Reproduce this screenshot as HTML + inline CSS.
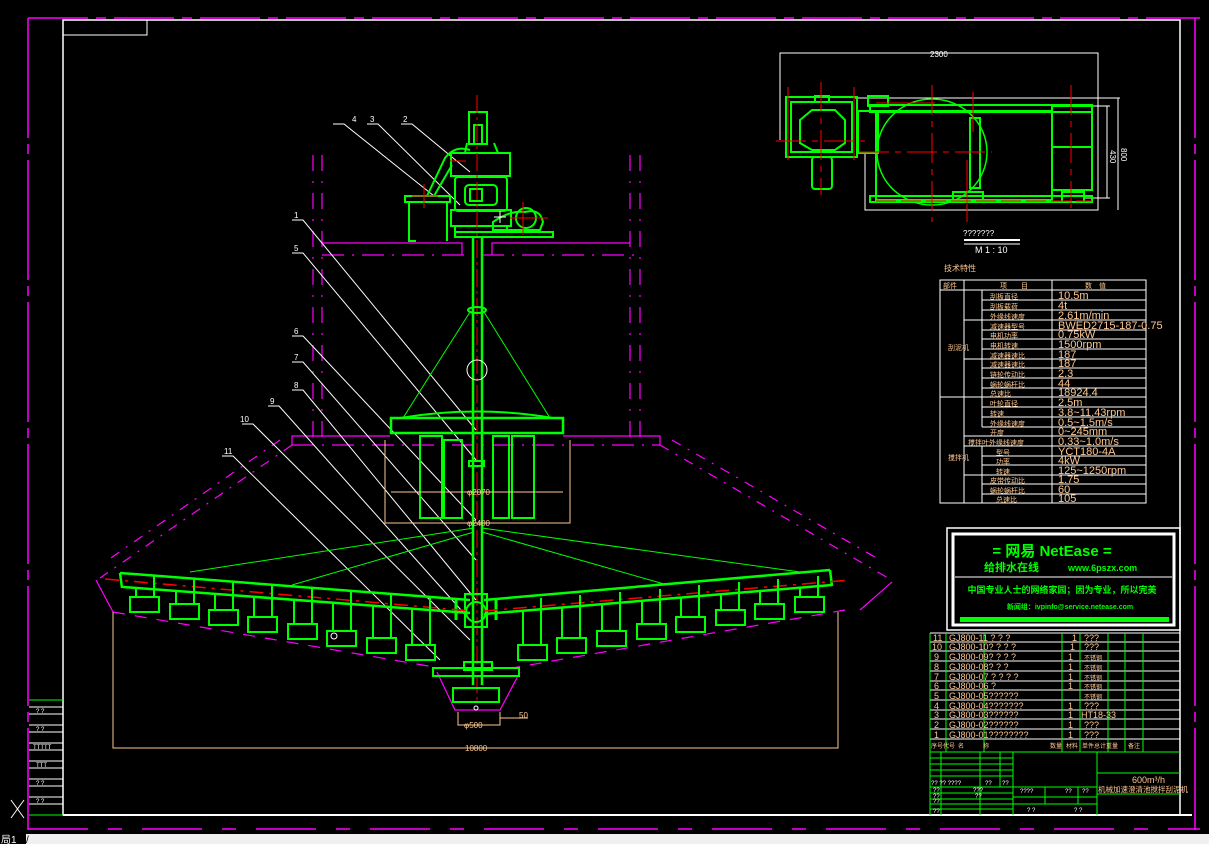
<!DOCTYPE html>
<html><head><meta charset="utf-8"><style>
html,body{margin:0;padding:0;background:#000;width:1209px;height:844px;overflow:hidden}
svg{display:block}
text{font-family:"Liberation Sans","Noto Sans CJK SC",sans-serif}
.o{fill:#ffc890}
.w{fill:#fff}
.g{fill:#00ff00}
</style></head><body>
<svg width="1209" height="844" viewBox="0 0 1209 844" xmlns="http://www.w3.org/2000/svg">
<rect width="1209" height="844" fill="#000"/>
<g fill="none">
<line x1="28" y1="18" x2="1200" y2="18" stroke="#ff00ff" stroke-width="1.5" stroke-dasharray="60 8 10 8"/>
<line x1="28" y1="18" x2="28" y2="830" stroke="#ff00ff" stroke-width="1.5" stroke-dasharray="120 6 10 6"/>
<line x1="1195" y1="18" x2="1195" y2="830" stroke="#ff00ff" stroke-width="1.5" stroke-dasharray="120 6 10 6"/>
<line x1="28" y1="829" x2="1200" y2="829" stroke="#ff00ff" stroke-width="1.5" stroke-dasharray="60 20 14 20"/>
<rect x="63" y="20" width="1117" height="795" stroke="#fff" stroke-width="1.5"/>
<rect x="63" y="20" width="84" height="15" stroke="#fff" stroke-width="1"/>
<line x1="63" y1="815" x2="1192" y2="815" stroke="#fff" stroke-width="2"/>
</g>
<g stroke="#fff" stroke-width="1">
<line x1="29" y1="700" x2="63" y2="700" stroke="#00ff00"/>
<line x1="29" y1="707" x2="63" y2="707"/><line x1="29" y1="714" x2="63" y2="714"/>
<line x1="29" y1="725" x2="63" y2="725"/><line x1="29" y1="732" x2="63" y2="732"/>
<line x1="29" y1="743" x2="63" y2="743"/><line x1="29" y1="750" x2="63" y2="750"/>
<line x1="29" y1="761" x2="63" y2="761"/><line x1="29" y1="768" x2="63" y2="768"/>
<line x1="29" y1="779" x2="63" y2="779"/><line x1="29" y1="786" x2="63" y2="786"/>
<line x1="29" y1="797" x2="63" y2="797"/><line x1="29" y1="804" x2="63" y2="804"/>
<line x1="29" y1="815" x2="63" y2="815" stroke="#00ff00"/>
<line x1="11" y1="800" x2="24" y2="818"/><line x1="24" y1="800" x2="11" y2="818"/>
</g>
<g class="w" font-size="6"><text x="36" y="713">? ?</text><text x="36" y="731">? ?</text><text x="33" y="749">TTTTT</text><text x="36" y="767">TTT</text><text x="36" y="785">? ?</text><text x="36" y="803">? ?</text></g>

<g fill="none" stroke="#ff00ff" stroke-width="1.2">
<line x1="313" y1="155" x2="313" y2="440" stroke-dasharray="16 10 2 10"/>
<line x1="322" y1="155" x2="322" y2="440" stroke-dasharray="16 10 2 10"/>
<line x1="630" y1="155" x2="630" y2="440" stroke-dasharray="16 10 2 10"/>
<line x1="640" y1="155" x2="640" y2="440" stroke-dasharray="16 10 2 10"/>
<polyline points="322,243 462,243 462,255"/>
<polyline points="492,255 492,243 630,243"/>
<line x1="322" y1="255" x2="640" y2="255" stroke-dasharray="22 8 2 8"/>
<polyline points="292,445 292,436 390,436"/>
<polyline points="563,436 660,436 660,445"/>
<line x1="292" y1="445" x2="660" y2="445" stroke-dasharray="22 8 2 8"/>
<line x1="292" y1="445" x2="100" y2="578" stroke-dasharray="10 8 2 8"/>
<line x1="280" y1="440" x2="108" y2="560" stroke-dasharray="10 8 2 8"/>
<line x1="660" y1="445" x2="888" y2="578" stroke-dasharray="10 8 2 8"/>
<line x1="672" y1="440" x2="880" y2="560" stroke-dasharray="10 8 2 8"/>
<polyline points="96,580 113,612"/>
<polyline points="892,582 860,610"/>
<line x1="113" y1="612" x2="440" y2="668" stroke-dasharray="12 10"/>
<line x1="845" y1="610" x2="512" y2="668" stroke-dasharray="12 10"/>
<polyline points="437,672 455,710 500,710 520,672"/>
</g>

<g stroke="#fff" stroke-width="1" fill="none">
<polyline points="333,124 344,124 434,196"/>
<polyline points="367,124 378,124 460,205"/>
<polyline points="401,124 412,124 470,172"/>
<polyline points="292,220 303,220 476,430"/>
<polyline points="292,253 303,253 476,460"/>
<polyline points="292,336 303,336 476,520"/>
<polyline points="292,362 303,362 476,560"/>
<polyline points="292,390 303,390 476,600"/>
<polyline points="268,406 279,406 470,620"/>
<polyline points="242,424 253,424 470,640"/>
<polyline points="222,456 233,456 440,660"/>
</g>
<g class="w" font-size="8" font-family="Liberation Mono,monospace">
<text x="352" y="122">4</text><text x="370" y="122">3</text><text x="403" y="122">2</text>
<text x="294" y="218">1</text><text x="294" y="251">5</text><text x="294" y="334">6</text>
<text x="294" y="360">7</text><text x="294" y="388">8</text><text x="270" y="404">9</text>
<text x="240" y="422">10</text><text x="224" y="454">11</text>
</g>

<g fill="none" stroke="#00ff00" stroke-width="2">
<rect x="469" y="112" width="18" height="32"/>
<rect x="474" y="125" width="8" height="19"/>
<polyline points="467,143 465,153 498,153 494,143"/>
<rect x="451" y="153" width="59" height="23"/>
<rect x="455" y="177" width="52" height="34" rx="3"/>
<rect x="465" y="185" width="32" height="20" rx="4"/>
<rect x="470" y="189" width="12" height="12"/>
<rect x="451" y="210" width="60" height="16"/>
<rect x="455" y="226" width="52" height="6"/>
<rect x="455" y="232" width="98" height="5"/>
<rect x="405" y="196" width="45" height="6"/>
<polyline points="409,202 409,241 416,241"/>
<polyline points="447,202 447,241"/>
<path d="M427,196 L445,158 Q455,145 470,150 M434,196 L452,165"/>
<path d="M493,222 Q510,210 525,212 Q540,208 543,222 L540,230 L493,230 Z"/>
<circle cx="526" cy="218" r="10"/>
</g>
<g stroke="#ff0000" stroke-width="1">
<line x1="477" y1="95" x2="477" y2="700" stroke-dasharray="18 4 3 4"/>
<line x1="424" y1="184" x2="424" y2="208"/><line x1="412" y1="196" x2="438" y2="196"/>
<line x1="450" y1="161" x2="466" y2="161"/>
<line x1="523" y1="202" x2="523" y2="235"/><line x1="510" y1="218" x2="548" y2="218"/>
</g>
<g stroke="#fff" stroke-width="1"><line x1="500" y1="211" x2="500" y2="223"/><line x1="494" y1="217" x2="506" y2="217"/></g>

<g stroke="#00ff00" stroke-width="2.5">
<line x1="473" y1="237" x2="473" y2="685"/>
<line x1="482" y1="237" x2="482" y2="685"/>
</g>
<g fill="none" stroke="#00ff00">
<ellipse cx="477" cy="310" rx="9" ry="3" stroke-width="2"/>
<line x1="470" y1="312" x2="403" y2="418" stroke-width="1"/>
<line x1="484" y1="312" x2="550" y2="418" stroke-width="1"/>
<path d="M400,418 Q477,405 553,418" stroke-width="2"/>
<rect x="391" y="418" width="172" height="15" stroke-width="2.5"/>
<line x1="391" y1="433" x2="563" y2="433" stroke-width="2"/>
<rect x="420" y="436" width="22" height="82" stroke-width="2"/>
<rect x="444" y="440" width="18" height="78" stroke-width="2"/>
<rect x="493" y="436" width="16" height="82" stroke-width="2"/>
<rect x="512" y="436" width="22" height="82" stroke-width="2"/>
<rect x="469" y="461" width="15" height="5" stroke-width="2"/>
<rect x="464" y="662" width="28" height="8" stroke-width="2"/>
<rect x="433" y="668" width="86" height="8" stroke-width="2"/>
<rect x="453" y="688" width="46" height="14" stroke-width="2"/>
<circle cx="476" cy="612" r="10" stroke-width="2"/>
<rect x="465" y="594" width="22" height="33" stroke-width="2"/>
<line x1="456" y1="598" x2="456" y2="620" stroke-width="3"/>
<line x1="496" y1="598" x2="496" y2="620" stroke-width="3"/>
</g>
<g fill="none" stroke="#fff" stroke-width="1">
<circle cx="477" cy="370" r="10"/>
<circle cx="334" cy="636" r="3"/>
<circle cx="476" cy="708" r="2"/>
</g>
<g stroke="#ffc890" stroke-width="1" fill="none">
<line x1="391" y1="492" x2="563" y2="492"/>
<polyline points="385,440 385,523 570,523 570,440"/>
<polyline points="113,612 113,748 838,748 838,612"/>
<polyline points="458,712 458,725 500,725 500,712"/>
<line x1="500" y1="718" x2="528" y2="718"/>
</g>
<g class="o" font-size="8" font-family="Liberation Mono,monospace">
<text x="467" y="495">φ2070</text><text x="467" y="526">φ2400</text>
<text x="465" y="751">10800</text><text x="464" y="728">φ500</text><text x="519" y="718">50</text>
</g>

<g stroke="#00ff00" stroke-width="1" fill="none">
<line x1="474" y1="528" x2="190" y2="572"/>
<line x1="474" y1="532" x2="292" y2="585"/>
<line x1="482" y1="528" x2="800" y2="572"/>
<line x1="482" y1="532" x2="664" y2="584"/>
</g>

<g fill="none" stroke="#00ff00" stroke-width="2.5">
<polyline points="120,573 470,600"/>
<polyline points="123,587 470,613"/>
<line x1="120" y1="573" x2="122" y2="588"/>
<polyline points="484,600 830,570"/>
<polyline points="484,614 832,585"/>
<line x1="830" y1="570" x2="832" y2="586"/>
</g>
<g stroke="#ff0000" stroke-width="1.5" stroke-dasharray="14 6 3 6">
<line x1="105" y1="579" x2="472" y2="611"/>
<line x1="484" y1="611" x2="850" y2="580"/>
</g>
<g fill="none" stroke="#00ff00" stroke-width="2">
<g><rect x="130" y="597" width="29" height="15"/><line x1="136" y1="588" x2="136" y2="597"/><line x1="154" y1="576" x2="154" y2="597"/></g>
<g><rect x="170" y="604" width="29" height="15"/><line x1="176" y1="591" x2="176" y2="604"/><line x1="194" y1="579" x2="194" y2="604"/></g>
<g><rect x="209" y="610" width="29" height="15"/><line x1="215" y1="594" x2="215" y2="610"/><line x1="233" y1="582" x2="233" y2="610"/></g>
<g><rect x="248" y="617" width="29" height="15"/><line x1="254" y1="597" x2="254" y2="617"/><line x1="272" y1="585" x2="272" y2="617"/></g>
<g><rect x="288" y="624" width="29" height="15"/><line x1="294" y1="600" x2="294" y2="624"/><line x1="312" y1="588" x2="312" y2="624"/></g>
<g><rect x="327" y="631" width="29" height="15"/><line x1="333" y1="603" x2="333" y2="631"/><line x1="351" y1="591" x2="351" y2="631"/></g>
<g><rect x="367" y="638" width="29" height="15"/><line x1="373" y1="606" x2="373" y2="638"/><line x1="391" y1="594" x2="391" y2="638"/></g>
<g><rect x="406" y="645" width="29" height="15"/><line x1="412" y1="609" x2="412" y2="645"/><line x1="430" y1="597" x2="430" y2="645"/></g>
<g><rect x="518" y="645" width="29" height="15"/><line x1="523" y1="610" x2="523" y2="645"/><line x1="541" y1="598" x2="541" y2="645"/></g>
<g><rect x="557" y="638" width="29" height="15"/><line x1="562" y1="607" x2="562" y2="638"/><line x1="580" y1="595" x2="580" y2="638"/></g>
<g><rect x="597" y="631" width="29" height="15"/><line x1="602" y1="604" x2="602" y2="631"/><line x1="620" y1="592" x2="620" y2="631"/></g>
<g><rect x="637" y="624" width="29" height="15"/><line x1="642" y1="601" x2="642" y2="624"/><line x1="660" y1="589" x2="660" y2="624"/></g>
<g><rect x="676" y="617" width="29" height="15"/><line x1="681" y1="597" x2="681" y2="617"/><line x1="699" y1="585" x2="699" y2="617"/></g>
<g><rect x="716" y="610" width="29" height="15"/><line x1="721" y1="594" x2="721" y2="610"/><line x1="739" y1="582" x2="739" y2="610"/></g>
<g><rect x="755" y="604" width="29" height="15"/><line x1="760" y1="591" x2="760" y2="604"/><line x1="778" y1="579" x2="778" y2="604"/></g>
<g><rect x="795" y="597" width="29" height="15"/><line x1="800" y1="588" x2="800" y2="597"/><line x1="818" y1="576" x2="818" y2="597"/></g>
</g>

<g fill="none" stroke="#fff" stroke-width="1">
<polyline points="780,140 780,53 1098,53 1098,210 865,210 865,152"/>
<line x1="855" y1="98" x2="1120" y2="98"/>
<line x1="1085" y1="106" x2="1110" y2="106"/>
<line x1="1085" y1="198" x2="1110" y2="198"/>
<line x1="1107" y1="106" x2="1107" y2="198"/>
<line x1="1118" y1="98" x2="1118" y2="210"/>
<line x1="964" y1="240" x2="1020" y2="240" stroke-width="2"/>
<line x1="964" y1="244" x2="1020" y2="244"/>
</g>
<g class="w" font-family="Liberation Mono,monospace" font-size="8">
<text x="930" y="57">2300</text>
<text x="963" y="236">???????</text>
<text x="975" y="253" font-size="9">M 1 : 10</text>
<text transform="translate(1110,150) rotate(90)">430</text>
<text transform="translate(1121,148) rotate(90)">800</text>
</g>
<g fill="none" stroke="#00ff00" stroke-width="2">
<rect x="786" y="97" width="71" height="60"/>
<rect x="791" y="102" width="61" height="50"/>
<path d="M800,120 L812,110 L835,110 L845,120 L845,143 L835,150 L812,150 L800,143 Z"/>
<rect x="812" y="157" width="20" height="32" rx="3"/>
<rect x="815" y="96" width="14" height="6"/>
<rect x="858" y="111" width="20" height="42"/>
<rect x="870" y="105" width="222" height="7"/>
<rect x="876" y="111" width="176" height="89"/>
<ellipse cx="932" cy="152" rx="55" ry="53" stroke-width="1.5"/>
<rect x="970" y="118" width="10" height="70"/>
<rect x="1052" y="106" width="40" height="84"/>
<line x1="1052" y1="147" x2="1092" y2="147"/>
<rect x="870" y="196" width="222" height="6"/>
<rect x="953" y="192" width="30" height="10"/>
<rect x="1062" y="192" width="22" height="10"/>
<rect x="868" y="96" width="20" height="10"/>
</g>
<g stroke="#ff0000" stroke-width="1">
<line x1="776" y1="141" x2="865" y2="141" stroke-dasharray="30 6 6 6"/>
<line x1="859" y1="152" x2="992" y2="152" stroke-dasharray="30 6 6 6"/>
<line x1="821" y1="82" x2="821" y2="195" stroke-dasharray="30 6 6 6"/>
<line x1="932" y1="85" x2="932" y2="222" stroke-dasharray="30 6 6 6"/>
<line x1="1071" y1="85" x2="1071" y2="208" stroke-dasharray="30 6 6 6"/>
<line x1="973" y1="92" x2="973" y2="132"/>
<line x1="967" y1="160" x2="967" y2="222"/>
<line x1="876" y1="201" x2="1092" y2="201" stroke-dasharray="20 5"/>
<line x1="788" y1="87" x2="788" y2="160"/><line x1="854" y1="87" x2="854" y2="160"/>
<line x1="876" y1="103" x2="935" y2="103"/>
</g>

<text x="944" y="271" class="o" font-size="8">技术特性</text>
<g stroke="#fff" stroke-width="1" fill="none">
<rect x="940" y="280" width="206" height="223"/>
<line x1="940" y1="290" x2="1146" y2="290"/>
<line x1="964" y1="280" x2="964" y2="503"/>
<line x1="1052" y1="280" x2="1052" y2="503"/>
<line x1="982" y1="290" x2="982" y2="427"/>
<line x1="982" y1="446" x2="982" y2="503"/>
<line x1="940" y1="397" x2="1146" y2="397"/>
<line x1="964" y1="320" x2="1146" y2="320"/>
<line x1="964" y1="359" x2="1146" y2="359"/>
<line x1="964" y1="436" x2="1146" y2="436"/>
<line x1="964" y1="446" x2="1146" y2="446"/>
<line x1="964" y1="475" x2="1146" y2="475"/>
<line x1="982" y1="300" x2="1146" y2="300"/><line x1="982" y1="310" x2="1146" y2="310"/>
<line x1="982" y1="330" x2="1146" y2="330"/><line x1="982" y1="339" x2="1146" y2="339"/><line x1="982" y1="349" x2="1146" y2="349"/>
<line x1="982" y1="368" x2="1146" y2="368"/><line x1="982" y1="378" x2="1146" y2="378"/><line x1="982" y1="388" x2="1146" y2="388"/>
<line x1="982" y1="407" x2="1146" y2="407"/><line x1="982" y1="417" x2="1146" y2="417"/><line x1="982" y1="427" x2="1146" y2="427"/>
<line x1="982" y1="456" x2="1146" y2="456"/><line x1="982" y1="465" x2="1146" y2="465"/>
<line x1="982" y1="484" x2="1146" y2="484"/><line x1="982" y1="494" x2="1146" y2="494"/>
</g>
<g class="o" font-size="11" font-family="Liberation Sans,sans-serif">
<text x="1058" y="299">10.5m</text><text x="1058" y="309">4t</text><text x="1058" y="319">2.61m/min</text>
<text x="1058" y="329">BWED2715-187-0.75</text><text x="1058" y="338">0.75kW</text><text x="1058" y="348">1500rpm</text>
<text x="1058" y="358">187</text><text x="1058" y="367">187</text><text x="1058" y="377">2.3</text>
<text x="1058" y="387">44</text><text x="1058" y="396">18924.4</text><text x="1058" y="406">2.5m</text>
<text x="1058" y="416">3.8~11.43rpm</text><text x="1058" y="426">0.5~1.5m/s</text><text x="1058" y="435">0~245mm</text>
<text x="1058" y="445">0.33~1.0m/s</text><text x="1058" y="455">YCT180-4A</text><text x="1058" y="464">4kW</text>
<text x="1058" y="474">125~1250rpm</text><text x="1058" y="483">1.75</text><text x="1058" y="493">60</text><text x="1058" y="502">105</text>
</g>
<g class="o" font-size="7">
<text x="943" y="288">部件</text><text x="1000" y="288">项　　目</text><text x="1085" y="288">数　值</text>
<text x="948" y="350">刮泥机</text><text x="948" y="460">搅拌机</text>
<text x="990" y="299">刮板直径</text><text x="990" y="309">刮板载荷</text><text x="990" y="319">外缘线速度</text>
<text x="990" y="329">减速器型号</text><text x="990" y="338">电机功率</text><text x="990" y="348">电机转速</text>
<text x="990" y="358">减速器速比</text><text x="990" y="367">减速器速比</text><text x="990" y="377">链轮传动比</text>
<text x="990" y="387">蜗轮蜗杆比</text><text x="990" y="396">总速比</text><text x="990" y="406">叶轮直径</text>
<text x="990" y="416">转速</text><text x="990" y="426">外缘线速度</text><text x="990" y="435">开度</text>
<text x="968" y="445">搅拌叶外缘线速度</text><text x="996" y="455">型号</text><text x="996" y="464">功率</text>
<text x="996" y="474">转速</text><text x="990" y="483">皮带传动比</text><text x="990" y="493">蜗轮蜗杆比</text><text x="996" y="502">总速比</text>
</g>

<g fill="none" stroke="#fff">
<rect x="947" y="528" width="233" height="102" stroke-width="1.5"/>
<rect x="953" y="534" width="221" height="91" stroke-width="3"/>
<line x1="955" y1="577" x2="1172" y2="577" stroke-width="1"/>
</g>
<rect x="960" y="617" width="209" height="5" fill="#00ff00"/>
<g class="g" font-weight="bold">
<text x="1052" y="556" font-size="15" text-anchor="middle">=  网易 NetEase =</text>
<text x="984" y="571" font-size="11">给排水在线</text>
<text x="1068" y="571" font-size="9" font-family="Liberation Serif,serif">www.6pszx.com</text>
<text x="1062" y="593" font-size="9" text-anchor="middle">中国专业人士的网络家园；因为专业，所以完美</text>
<text x="1070" y="609" font-size="7" text-anchor="middle">新闻组：ivpinfo@service.netease.com</text>
</g>

<g stroke="#fff" stroke-width="1">
<line x1="930" y1="633" x2="1180" y2="633"/><line x1="930" y1="642" x2="1180" y2="642"/>
<line x1="930" y1="651" x2="1180" y2="651"/><line x1="930" y1="661" x2="1180" y2="661"/>
<line x1="930" y1="671" x2="1180" y2="671"/><line x1="930" y1="681" x2="1180" y2="681"/>
<line x1="930" y1="690" x2="1180" y2="690"/><line x1="930" y1="700" x2="1180" y2="700"/>
<line x1="930" y1="710" x2="1180" y2="710"/><line x1="930" y1="719" x2="1180" y2="719"/>
<line x1="930" y1="729" x2="1180" y2="729"/><line x1="930" y1="739" x2="1180" y2="739"/>
</g>
<g stroke="#00ff00" stroke-width="1" fill="none">
<line x1="930" y1="633" x2="930" y2="815"/>
<line x1="946" y1="633" x2="946" y2="752"/><line x1="984" y1="633" x2="984" y2="752"/>
<line x1="1062" y1="633" x2="1062" y2="752"/><line x1="1080" y1="633" x2="1080" y2="752"/>
<line x1="1108" y1="633" x2="1108" y2="752"/><line x1="1125" y1="633" x2="1125" y2="752"/>
<line x1="1143" y1="633" x2="1143" y2="752"/>
<line x1="930" y1="752" x2="1180" y2="752"/>
<line x1="941" y1="752" x2="941" y2="815"/><line x1="980" y1="752" x2="980" y2="815"/>
<line x1="1000" y1="752" x2="1000" y2="787"/><line x1="1013" y1="752" x2="1013" y2="815"/>
<line x1="1097" y1="752" x2="1097" y2="815"/>
<line x1="1097" y1="773" x2="1180" y2="773"/><line x1="1097" y1="794" x2="1180" y2="794"/>
<line x1="930" y1="758" x2="1013" y2="758"/><line x1="930" y1="764" x2="1013" y2="764"/>
<line x1="930" y1="770" x2="1013" y2="770"/><line x1="930" y1="776" x2="1013" y2="776"/>
<line x1="930" y1="787" x2="1097" y2="787"/><line x1="930" y1="793" x2="1013" y2="793"/>
<line x1="930" y1="799" x2="1013" y2="799"/><line x1="930" y1="804" x2="1097" y2="804"/>
<line x1="930" y1="809" x2="1013" y2="809"/>
<line x1="1013" y1="797" x2="1097" y2="797"/>
<line x1="1045" y1="787" x2="1045" y2="804"/><line x1="1078" y1="787" x2="1078" y2="804"/>
</g>
<g class="o" font-size="9" font-family="Liberation Sans,sans-serif">
<text x="933" y="641">11</text><text x="949" y="641">GJ800-11  ? ? ?</text><text x="1072" y="641">1</text><text x="1084" y="641">???</text>
<text x="932" y="650">10</text><text x="949" y="650">GJ800-10? ? ? ?</text><text x="1070" y="650">1</text><text x="1084" y="650">???</text>
<text x="934" y="660">9</text><text x="949" y="660">GJ800-09? ? ? ?</text><text x="1068" y="660">1</text><text x="1084" y="660" font-size="6">不锈钢</text>
<text x="934" y="670">8</text><text x="949" y="670">GJ800-08? ? ?</text><text x="1068" y="670">1</text><text x="1084" y="670" font-size="6">不锈钢</text>
<text x="934" y="680">7</text><text x="949" y="680">GJ800-07 ? ? ? ?</text><text x="1068" y="680">1</text><text x="1084" y="680" font-size="6">不锈钢</text>
<text x="934" y="689">6</text><text x="949" y="689">GJ800-06   ?</text><text x="1068" y="689">1</text><text x="1084" y="689" font-size="6">不锈钢</text>
<text x="934" y="699">5</text><text x="949" y="699">GJ800-05??????</text><text x="1084" y="699" font-size="6">不锈钢</text>
<text x="934" y="709">4</text><text x="949" y="709">GJ800-04???????</text><text x="1068" y="709">1</text><text x="1084" y="709">???</text>
<text x="934" y="718">3</text><text x="949" y="718">GJ800-03??????</text><text x="1068" y="718">1</text><text x="1081" y="718">HT18-33</text>
<text x="934" y="728">2</text><text x="949" y="728">GJ800-02??????</text><text x="1068" y="728">1</text><text x="1084" y="728">???</text>
<text x="934" y="738">1</text><text x="949" y="738">GJ800-01????????</text><text x="1068" y="738">1</text><text x="1084" y="738">???</text>
</g>
<g class="o" font-size="6"><text x="931" y="748">序号代号</text><text x="958" y="748">名</text><text x="983" y="748">称</text><text x="1050" y="748">数量</text><text x="1066" y="748">材料</text><text x="1082" y="748">单件总计重量</text><text x="1128" y="748">备注</text></g>
<g class="w" font-size="6"><text x="931" y="785">?? ?? ????</text><text x="985" y="785">??</text><text x="1002" y="785">??</text>
<text x="933" y="792">??</text><text x="973" y="792">???</text><text x="933" y="798">??</text><text x="975" y="798">??</text><text x="933" y="803">??</text><text x="933" y="813">??</text>
<text x="1020" y="793">????</text><text x="1065" y="793">??</text><text x="1082" y="793">??</text><text x="1027" y="812">? ?</text><text x="1074" y="812">? ?</text></g>
<text x="1132" y="783" class="o" font-size="9">600m³/h</text>
<text x="1098" y="792" class="o" font-size="7.5">机械加速澄清池搅拌刮泥机</text>

<rect x="0" y="834" width="1209" height="10" fill="#f0f0f0"/>
<rect x="0" y="834" width="26" height="10" fill="#000"/>
<text x="1" y="843" font-size="10" fill="#fff">局1</text>
<text x="26" y="843" font-size="10" fill="#000">/</text>
</svg>
</body></html>
